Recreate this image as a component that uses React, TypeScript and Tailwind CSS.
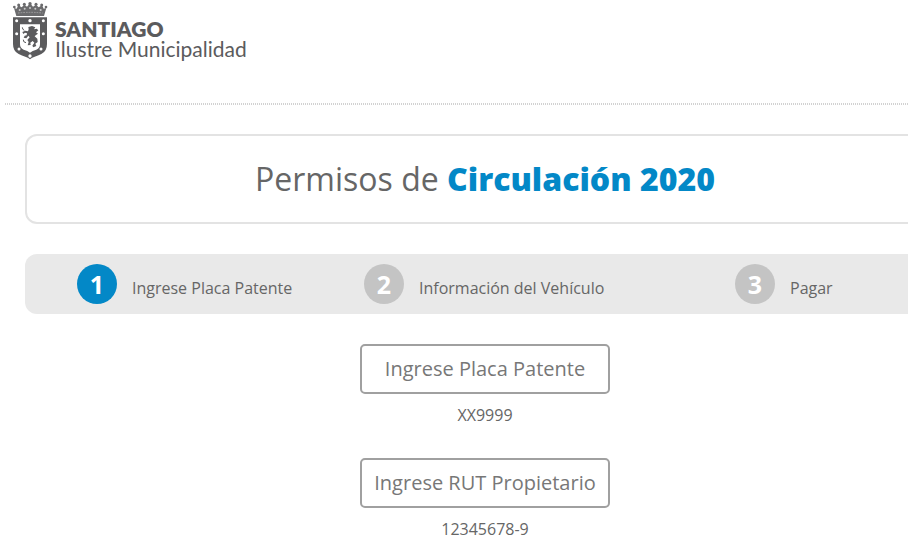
import type { ReactNode } from "react";

const steps = [
  { number: 1, label: "Ingrese Placa Patente", active: true },
  { number: 2, label: "Información del Vehículo", active: false },
  { number: 3, label: "Pagar", active: false },
];

const Shield = () => (
  <svg viewBox="36 6 108 174" className="h-[58px] w-9 shrink-0" aria-hidden="true">
    {/* crown */}
    <g fill="#6b6b6d">
      <path d="M49 48 L42 24 L50 26 L55 16 L65 22 L73 14 L81 20 L90 10 L99 20 L108 14 L116 22 L126 16 L131 26 L139 24 L132 48 Z" />
      <circle cx="43" cy="21" r="4" />
      <circle cx="56" cy="15" r="4.5" />
      <circle cx="73" cy="13" r="4.5" />
      <circle cx="90" cy="11" r="5" />
      <circle cx="108" cy="13" r="4.5" />
      <circle cx="125" cy="15" r="4.5" />
      <circle cx="138" cy="21" r="4" />
    </g>
    <g fill="#c9c9ca">
      <circle cx="59" cy="30" r="3" />
      <circle cx="74" cy="26" r="3" />
      <circle cx="90" cy="24" r="3" />
      <circle cx="106" cy="26" r="3" />
      <circle cx="122" cy="30" r="3" />
    </g>
    <path d="M54 39 Q90 35 128 39" fill="none" stroke="#b5b5b6" strokeWidth="2" strokeDasharray="5 3" />
    {/* shield */}
    <path d="M39 52 H141 V132 Q141 154 124 162 Q114 167 104 170 Q96 172 90 178 Q84 172 76 170 Q66 167 56 162 Q39 154 39 132 Z" fill="#5b5b5d" />
    <path d="M60 73 H120 V132 Q120 145 109 149 Q97 152 90 158 Q83 152 71 149 Q60 145 60 132 Z" fill="#ffffff" />
    <g fill="#ffffff">
      <circle cx="50" cy="62" r="4.5" />
      <circle cx="90" cy="62" r="5" />
      <circle cx="130" cy="62" r="4.5" />
      <circle cx="50" cy="101" r="4.5" />
      <circle cx="130" cy="101" r="4.5" />
      <circle cx="57" cy="147" r="4.5" />
      <circle cx="123" cy="147" r="4.5" />
      <circle cx="90" cy="168" r="5" />
    </g>
    {/* lion */}
    <path d="M85 81 L96 78 L106 82 L102 88 L110 86 L115 91 L108 97 L114 101 L108 105 L104 109 L112 116 L113 126 L106 131 L109 138 L100 142 L97 137 L103 128 L98 123 L91 128 L92 135 L83 136 L86 126 L82 120 L89 112 L85 107 L79 115 L71 113 L74 107 L80 106 L81 100 L75 98 L70 102 L67 96 L76 92 L84 94 L86 88 Z" fill="#5b5b5d" />
    <path d="M67 82 Q67 89 73 91 M70 119 Q69 127 78 128" fill="none" stroke="#5b5b5d" strokeWidth="3" />
  </svg>
);

const Header = () => (
  <header className="pt-0.5 pl-[7px]">
    <a href="#" className="flex items-center gap-[7px] text-[#5b5b5d]">
      <Shield />
      <span className="flex flex-col pt-4 font-['Lato',sans-serif] text-[21px] leading-5">
        <span className="font-extrabold">SANTIAGO</span>
        <span>Ilustre Municipalidad</span>
      </span>
    </a>
    <svg className="mt-[43px] -ml-[7px] block h-0.5 w-[calc(100%+7px)]" aria-hidden="true">
      <line x1="0" y1="1" x2="100%" y2="1" stroke="#d2d2d2" strokeWidth="2" strokeDasharray="1 1" />
    </svg>
  </header>
);

const Steps = () => (
  <ol className="mt-[30px] grid h-[60px] grid-cols-[287fr_371fr_210fr] items-center rounded-xl bg-[#e9e9e9] pl-[52px]">
    {steps.map((step) => (
      <li key={step.number} className="flex items-baseline gap-[15px]">
        <span
          className={
            step.active
              ? "size-10 rounded-full bg-[#0388c7] text-center text-[25px] leading-10 font-bold text-white"
              : "size-10 rounded-full bg-[#c4c4c4] text-center text-[25px] leading-10 font-bold text-white"
          }
        >
          {step.number}
        </span>
        <span>{step.label}</span>
      </li>
    ))}
  </ol>
);

type FieldProps = {
  id: string;
  placeholder: string;
  children: ReactNode;
};

const Field = ({ id, placeholder, children }: FieldProps) => (
  <div className="flex flex-col items-center gap-2">
    <input
      id={id}
      type="text"
      placeholder={placeholder}
      className="h-[50px] w-[250px] rounded-[5px] border-2 border-[#a0a0a0] bg-white pb-0.5 text-center text-xl placeholder:text-[#777777]"
    />
    <label htmlFor={id} className="leading-[26px]">{children}</label>
  </div>
);

const App = () => {
  return (
    <div className="overflow-x-hidden bg-white font-['Open_Sans',sans-serif] text-base text-[#666666]">
      <div className="min-w-[965px] pl-[5px]">
        <Header />
        <main className="px-5 pt-[29px]">
          <h1 className="rounded-xl border-2 border-[#e3e3e3] py-[23px] text-center text-[32px] leading-10">
            Permisos de <strong className="font-extrabold text-[#0388c7]">Circulación 2020</strong>
          </h1>
          <Steps />
          <form className="flex flex-col gap-[30px] pt-[30px]">
            <Field id="placa" placeholder="Ingrese Placa Patente">XX9999</Field>
            <Field id="rut" placeholder="Ingrese RUT Propietario">12345678-9</Field>
          </form>
        </main>
      </div>
    </div>
  );
};

export default App;
